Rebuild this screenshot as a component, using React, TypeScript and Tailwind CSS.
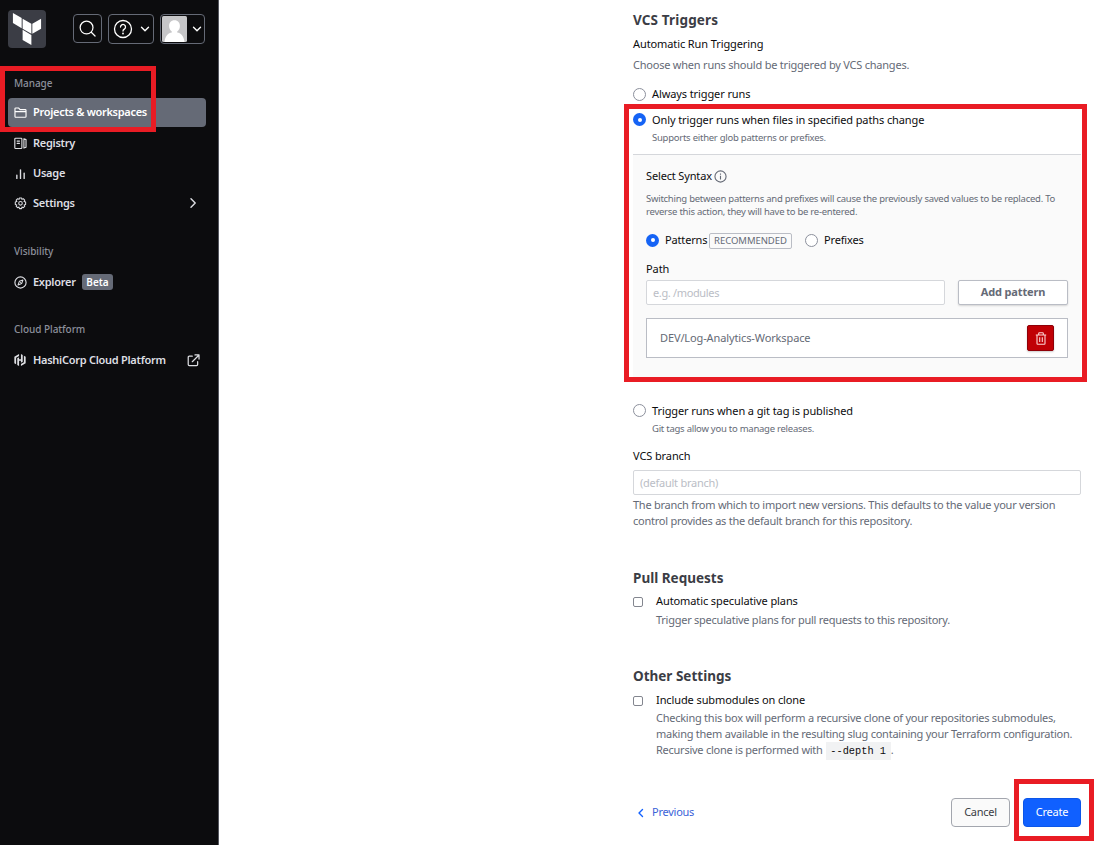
import React from "react";
import { SiTerraform, SiHashicorp } from "react-icons/si";

const Radio = ({ on = false }: { on?: boolean }) =>
  on ? (
    <span className="flex size-[13px] shrink-0 items-center justify-center rounded-full bg-[#1563f5]">
      <span className="size-[4px] rounded-full bg-white" />
    </span>
  ) : (
    <span className="size-[13px] shrink-0 rounded-full border border-[#8c909c] bg-white" />
  );

const Checkbox = () => (
  <span className="mt-[4px] size-[10px] shrink-0 rounded-[2px] border border-[#83868f] bg-white" />
);

const Chevron = ({ d, className }: { d: string; className: string }) => (
  <svg viewBox="0 0 10 10" className={className} fill="none" stroke="currentColor" strokeWidth="1.4" strokeLinecap="round" strokeLinejoin="round">
    <path d={d} />
  </svg>
);

const Icon = ({ children }: { children: React.ReactNode }) => (
  <svg viewBox="0 0 16 16" className="size-[13px] shrink-0" fill="none" stroke="currentColor" strokeWidth="1.4" strokeLinecap="round" strokeLinejoin="round">
    {children}
  </svg>
);

function Sidebar() {
  return (
    <aside className="h-[845px] w-[219px] shrink-0 border-r border-[#55575f] bg-[#0c0c0e] text-[11px] font-semibold tracking-[-0.27px] text-[#dedfe3]">
      <div className="flex h-[58px] items-start pl-[8px] pt-[10px]">
        <div className="flex size-[38px] items-center justify-center rounded-[4px] bg-[#3b3d45]">
          <SiTerraform className="size-[32px] text-white" />
        </div>
        <div className="ml-[27px] mt-[4px] flex h-[29px] w-[29px] items-center justify-center rounded-[4px] border border-[#656a76] pr-px pb-px">
          <svg viewBox="0 0 18 18" className="size-[17px]" fill="none" stroke="#fff" strokeWidth="1.3" strokeLinecap="round">
            <circle cx="8" cy="8" r="6.8" />
            <path d="M13 13l4 4" />
          </svg>
        </div>
        <div className="ml-[6px] mt-[4px] flex h-[30px] w-[46px] items-center rounded-[4px] border border-[#656a76] pb-px pl-[4px]">
          <svg viewBox="0 0 20 20" className="size-[20px]" fill="none" stroke="#fff" strokeWidth="1.3" strokeLinecap="round">
            <circle cx="10" cy="10" r="8.5" />
            <path d="M7.5 8a2.5 2.5 0 1 1 3.8 2.1c-.8.5-1.3.9-1.3 1.9" />
            <path d="M10 14.5v.1" strokeWidth="1.8" />
          </svg>
          <Chevron d="M1.5 3.2L5 6.7l3.5-3.5" className="ml-[7px] size-[10px] text-white" />
        </div>
        <div className="ml-[6px] mt-[4px] flex h-[30px] w-[45px] items-center rounded-[4px] border border-[#656a76] pl-[1px]">
          <svg viewBox="0 0 25 26" className="h-[26px] w-[25px]">
            <rect width="25" height="26" rx="1.5" fill="#c6c6c8" />
            <path d="M12.5 4.2c3.5 0 5.400 2.500 5.400 5.800 0 2.500-1.100 4.500-2.700 5.500v1c3.500.8 6.400 2.500 7.300 9.500H2.500c.9-7 3.800-8.700 7.300-9.500v-1C8.200 14.500 7.100 12.500 7.100 10c0-3.300 1.900-5.800 5.400-5.800z" fill="#fff" />
          </svg>
          <Chevron d="M1.500 3.200L5 6.700l3.500-3.500" className="ml-[5px] size-[10px] text-white" />
        </div>
      </div>

      <div className="mt-[17px] flex h-[16px] items-center pl-[14px] text-[10px] font-medium tracking-[-0.07px] text-[#8c909c]">
        Manage
      </div>
      <div className="mx-[8px] mt-[7px] flex h-[29px] w-[198px] items-center rounded-[4px] bg-[#656a76] pl-[6px] tracking-[-0.3px] text-white">
        <Icon>
          <path d="M1.200 12.800V3.500a1 1 0 0 1 1-1h3.600l1.700 2h6.300a1 1 0 0 1 1 1v7.300a1 1 0 0 1-1 1H2.200a1 1 0 0 1-1-1zM1.200 7h13.500" />
        </Icon>
        <span className="ml-[6px]">Projects &amp; workspaces</span>
      </div>
      <div className="mt-[1px] flex h-[30px] items-center pl-[14px]">
        <Icon>
          <path d="M2 1.500h6.700a1 1 0 0 1 1 1v10.700a1 1 0 0 1-1 1H2a1 1 0 0 1-1-1V2.500a1 1 0 0 1 1-1zM3.800 5h3M3.800 7.800h3M12.200 2.200v11.400M12.200 2.200l2.600 1v9.400l-2.600 1" />
        </Icon>
        <span className="ml-[6px]">Registry</span>
      </div>
      <div className="flex h-[30px] items-center pl-[14px]">
        <Icon>
          <path d="M3.500 10v4M8 3.500V14M12.500 7.500V14" strokeWidth="1.700" />
        </Icon>
        <span className="ml-[6px]">Usage</span>
      </div>
      <div className="flex h-[30px] items-center pl-[14px]">
        <Icon>
          <path d="M6.700 1.200h2.600l.5 1.700 1.600-.8 1.800 1.800-.8 1.700 1.900.6v2.900l-1.900.6.8 1.700-1.800 1.800-1.600-.8-.5 1.900H6.700l-.5-1.900-1.700.8-1.800-1.800.8-1.700-1.900-.6V6.200l1.900-.6-.8-1.700 1.800-1.800 1.700.8z" strokeWidth="1.300" />
          <circle cx="8" cy="7.800" r="2.200" strokeWidth="1.300" />
        </Icon>
        <span className="ml-[6px] w-[155px]">Settings</span>
        <Chevron d="M3 .8L7.200 5 3 9.200" className="size-[10px]" />
      </div>

      <div className="mt-[25px] flex h-[16px] items-center pl-[14px] text-[10px] font-medium tracking-[-0.05px] text-[#8c909c]">
        Visibility
      </div>
      <div className="mt-[8px] flex h-[30px] items-center pl-[14px]">
        <Icon>
          <circle cx="8" cy="8" r="6.900" />
          <path d="M11 5L9.400 9.300 5 11l1.600-4.400zM8 8v.1" strokeWidth="1.300" />
        </Icon>
        <span className="ml-[6px] w-[49px]">Explorer</span>
        <span className="flex h-[16px] w-[31px] items-center justify-center rounded-[3px] bg-[#656a76] text-[10px] tracking-normal text-white">
          Beta
        </span>
      </div>

      <div className="mt-[24px] flex h-[16px] items-center pl-[14px] text-[10px] font-medium tracking-[-0.05px] text-[#8c909c]">
        Cloud Platform
      </div>
      <div className="mt-[8px] flex h-[30px] items-center pl-[14px]">
        <SiHashicorp className="size-[12px] shrink-0" />
        <span className="ml-[7px] w-[154px]">HashiCorp Cloud Platform</span>
        <svg viewBox="0 0 16 16" className="size-[13px]" fill="none" stroke="currentColor" strokeWidth="1.500" strokeLinecap="round" strokeLinejoin="round">
          <path d="M6.500 2.700H2.800a1.300 1.300 0 0 0-1.300 1.300v9a1.300 1.300 0 0 0 1.300 1.300h9a1.300 1.300 0 0 0 1.300-1.300V9.500M9.800 1.200h5v5M14.500 1.500L6.500 9.500" />
        </svg>
      </div>
    </aside>
  );
}

export default function App() {
  return (
    <div className="relative flex h-[845px] w-[1102px] overflow-hidden whitespace-nowrap bg-white font-['Noto_Sans','Open_Sans',sans-serif]">
      <Sidebar />
      <main className="ml-[414px] w-[448px] pt-[10px] text-[11px] leading-[16px] tracking-[-0.25px] text-[#656a76]">
        <h2 className="text-[13.500px] font-bold leading-[20px] tracking-[0.150px] text-[#3b3d45]">VCS Triggers</h2>
        <div className="mt-[6px] tracking-[-0.1px] text-[#0c0c0e]">Automatic Run Triggering</div>
        <div className="mt-[5px] tracking-[-0.220px]">Choose when runs should be triggered by VCS changes.</div>
        <div className="mt-[13px] flex items-center gap-[6px] tracking-[-0.1px] text-[#0c0c0e]">
          <Radio />
          <span>Always trigger runs</span>
        </div>
        <div className="mt-[10px] flex items-start gap-[6px] tracking-[-0.1px] text-[#0c0c0e]">
          <span className="mt-px">
            <Radio on />
          </span>
          <span>Only trigger runs when files in specified paths change</span>
        </div>
        <div className="mt-[3px] pl-[19px] text-[9.500px] leading-[13px]">Supports either glob patterns or prefixes.</div>

        <section className="mt-[10px] h-[224px] border-t border-[#d5d7db] bg-[#fafafa] px-[13px] pt-[13px]">
          <div className="flex items-center gap-[2px] tracking-[-0.150px] text-[#0c0c0e]">
            <span>Select Syntax</span>
            <svg viewBox="0 0 14 14" className="size-[13px]" fill="none" stroke="#656a76" strokeWidth="1.200">
              <circle cx="7" cy="7" r="6" />
              <path d="M7 6.200v4M7 3.700v1.300" />
            </svg>
          </div>
          <div className="mt-[8px] text-[9.500px] leading-[13px]">
            Switching between patterns and prefixes will cause the previously saved values to be replaced. To
            <br />
            reverse this action, they will have to be re-entered.
          </div>
          <div className="mt-[14px] flex h-[16px] items-center tracking-[-0.150px] text-[#0c0c0e]">
            <Radio on />
            <span className="ml-[6px] w-[44px]">Patterns</span>
            <span className="mt-px flex h-[16px] w-[83px] items-center justify-center rounded-[2px] border border-[#babdc5] text-[9.500px] tracking-[-0.050px] text-[#656a76]">
              RECOMMENDED
            </span>
            <span className="ml-[13px] flex">
              <Radio />
            </span>
            <span className="ml-[6px]">Prefixes</span>
          </div>
          <div className="mt-[13px] tracking-[-0.1px] text-[#0c0c0e]">Path</div>
          <div className="mt-[3px] flex h-[25px] justify-between">
            <div className="flex w-[299px] items-center rounded-[2px] border border-[#d5d7db] bg-white pl-[6px] tracking-[-0.350px] text-[#babdc5]">
              e.g. /modules
            </div>
            <button className="w-[110px] rounded-[2px] border border-[#babdc5] bg-white pb-px text-[11px] font-bold tracking-[-0.150px] text-[#656a76] shadow-[0_1px_2px_rgba(0,0,0,0.15)]">
              Add pattern
            </button>
          </div>
          <div className="mt-[13px] flex h-[40px] items-center justify-between border border-[#babdc5] bg-white px-[13px]">
            <span className="tracking-[-0.120px]">DEV/Log-Analytics-Workspace</span>
            <button className="flex h-[26px] w-[27px] items-center justify-center rounded-[2px] border border-[#8f0008] bg-[#c00005] shadow-[0_1px_2px_rgba(0,0,0,0.2)]">
              <svg viewBox="0 0 12 13" className="h-[13px] w-[12px]" fill="none" stroke="#fbd4d4" strokeWidth="1.100">
                <path d="M.8 3h10.400M3.700 3V1.500a.7.7 0 0 1 .7-.7h3.200a.7.7 0 0 1 .7.7V3M2 3v8.500a.7.700 0 0 0 .7.700h6.600a.7.700 0 0 0 .7-.7V3M4.700 5.300v4.700M7.300 5.300v4.700" />
              </svg>
            </button>
          </div>
        </section>

        <div className="mt-[25px] flex items-start gap-[6px] tracking-[-0.1px] text-[#0c0c0e]">
          <span className="mt-px flex">
            <Radio />
          </span>
          <span>Trigger runs when a git tag is published</span>
        </div>
        <div className="mt-[3px] pl-[19px] text-[9.500px] leading-[13px]">Git tags allow you to manage releases.</div>
        <div className="mt-[13px] tracking-[-0.1px] text-[#0c0c0e]">VCS branch</div>
        <div className="mt-[6px] flex h-[25px] items-center rounded-[2px] border border-[#d5d7db] pl-[6px] text-[#babdc5]">
          (default branch)
        </div>
        <div className="mt-[2px]">
          The branch from which to import new versions. This defaults to the value your version
          <br />
          control provides as the default branch for this repository.
        </div>

        <h2 className="mt-[39px] text-[13.500px] font-bold leading-[20px] tracking-normal text-[#3b3d45]">Pull Requests</h2>
        <div className="mt-[5px] flex gap-[13px]">
          <Checkbox />
          <div>
            <div className="tracking-[-0.1px] text-[#0c0c0e]">Automatic speculative plans</div>
            <div className="mt-[3px]">Trigger speculative plans for pull requests to this repository.</div>
          </div>
        </div>

        <h2 className="mt-[38px] text-[13.500px] font-bold leading-[20px] tracking-normal text-[#3b3d45]">Other Settings</h2>
        <div className="mt-[6px] flex gap-[13px]">
          <Checkbox />
          <div>
            <div className="tracking-[-0.1px] text-[#0c0c0e]">Include submodules on clone</div>
            <div className="mt-[2px]">Checking this box will perform a recursive clone of your repositories submodules,</div>
            <div>making them available in the resulting slug containing your Terraform configuration.</div>
            <div className="flex h-[16px] items-center">
              <span>Recursive clone is performed with</span>
              <code className="ml-[3px] mt-px flex h-[18px] w-[65px] items-center justify-center bg-[#f1f2f3] font-['Liberation_Mono',monospace] text-[10.300px] tracking-normal text-[#0c0c0e]">
                --depth 1
              </code>
              <span>.</span>
            </div>
          </div>
        </div>

        <footer className="mt-[40px] flex h-[29px] items-center">
          <Chevron d="M6.500 1.500L3 5l3.500 3.500" className="ml-[3px] size-[10px] text-[#1060ff]" />
          <span className="mb-px ml-[6px] text-[#3a62d8]">Previous</span>
          <button className="ml-auto h-[29px] w-[59px] rounded-[4px] border border-[#a3a6ae] bg-[#fafafa] pb-px text-[#3b3d45]">Cancel</button>
          <button className="ml-[13px] h-[29px] w-[58px] rounded-[4px] border border-[#0c56e9] bg-[#1060ff] pb-px text-white">Create</button>
        </footer>
      </main>

      <div className="absolute left-0 top-[66px] h-[66px] w-[156px] border-5 border-[#e91c24]" />
      <div className="absolute left-[624px] top-[104px] h-[278px] w-[463px] border-5 border-[#e91c24]" />
      <div className="absolute left-[1014px] top-[779px] h-[62px] w-[80px] border-5 border-[#e91c24]" />
    </div>
  );
}
